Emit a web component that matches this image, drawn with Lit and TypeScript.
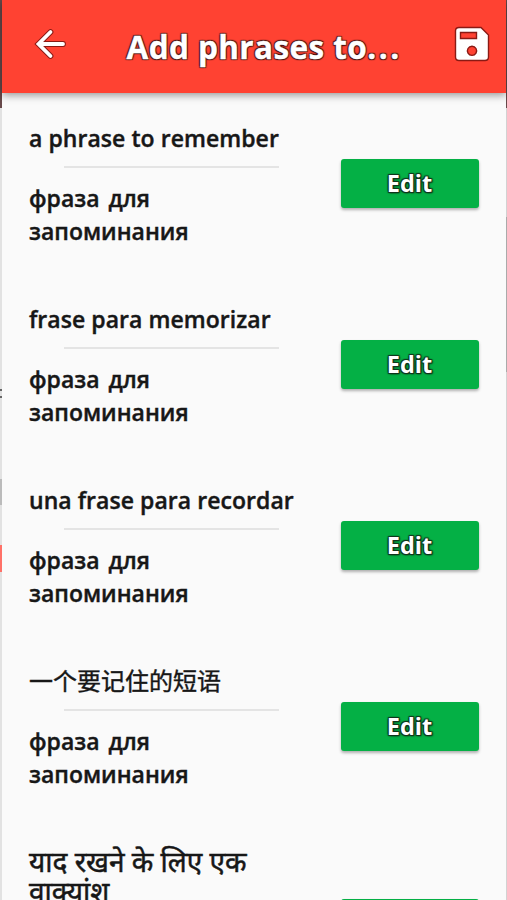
import { LitElement, html, css } from "lit";
import { customElement, property } from "lit/decorators.js";

@customElement("phrase-row")
class PhraseRow extends LitElement {
  @property() phrase = "";
  @property() translation = "";
  @property() script = "latin";

  static styles = css`
    :host {
      display: flex;
      align-items: center;
      justify-content: space-between;
      flex: none;
      padding: 28px 27.5px 26px 27px;
      font: 600 23px/33px "Open Sans", "Noto Sans", "Noto Sans CJK SC", sans-serif;
      color: #171717;
      -webkit-text-stroke: 0.4px #171717;
    }
    .texts {
      width: 276px;
      padding-top: 1.2px;
    }
    .latin {
      letter-spacing: 0.05px;
      white-space: nowrap;
    }
    .cjk {
      font-family: "Noto Sans CJK SC", sans-serif;
      font-weight: 400;
      font-size: 24px;
      line-height: 29px;
      height: 33px;
    }
    .deva {
      font-family: "Noto Sans", "Noto Sans Devanagari", sans-serif;
      font-weight: 400;
      font-size: 28px;
      line-height: 30px;
      width: 240px;
      height: 63px;
      -webkit-text-stroke-width: 0.5px;
    }
    .rule {
      height: 2px;
      margin: 11px 26px 14px 35px;
      background: #e4e4e4;
    }
    .translation {
      width: 210px;
      word-spacing: 3px;
    }
    .edit {
      box-sizing: border-box;
      width: 138px;
      height: 49px;
      margin-top: -1.5px;
      padding: 0;
      border: 0;
      border-radius: 3px;
      background: #04b045;
      box-shadow: 0 2px 3px rgba(0, 0, 0, 0.3);
      color: #fff;
      -webkit-text-stroke: 0;
      font: 700 23.5px/49px "Open Sans", "Noto Sans", sans-serif;
      text-shadow: 1px 1px 1px #10351b, -1px -1px 1px #10351b, 1px -1px 1px #10351b,
        -1px 1px 1px #10351b, 1px 1px 2px #10351b;
    }
  `;

  render() {
    return html`
      <div class="texts">
        <div class="phrase ${this.script}">${this.phrase}</div>
        <div class="rule"></div>
        <div class="translation">${this.translation}</div>
      </div>
      <button class="edit">Edit</button>
    `;
  }
}

@customElement("app-root")
class AppRoot extends LitElement {
  static styles = css`
    :host {
      display: flex;
      position: relative;
      height: 900px;
      overflow: hidden;
      background: #fafafa;
    }
    .edge {
      flex: none;
      display: flex;
      flex-direction: column;
      width: 2px;
      background: #e2e2e2;
    }
    .right {
      width: 1px;
      background: #d2d2d2;
    }
    .dark {
      height: 108px;
      background: #67494a;
    }
    .dot {
      height: 2px;
      width: 1.5px;
      margin-top: 5px;
      background: #666;
    }
    .dot.first {
      margin-top: 281px;
    }
    .grey {
      height: 26px;
      margin-top: 81px;
      background: #bbb;
    }
    .red {
      height: 27px;
      margin-top: 40px;
      background: #ff7168;
    }
    .mid {
      height: 155px;
      margin-top: 109px;
      background: #aaa;
    }
    .screen {
      flex: 1;
      min-width: 0;
      display: flex;
      flex-direction: column;
    }
    .bar {
      flex: none;
      display: flex;
      align-items: center;
      height: 92.5px;
      box-sizing: border-box;
      padding: 0 14.5px 4px 27.5px;
      background: #ff4232;
      box-shadow: 0 2px 8px rgba(0, 0, 0, 0.42);
      z-index: 1;
    }
    .icon {
      flex: none;
      display: block;
      overflow: visible;
    }
    .title {
      flex: 1;
      margin: 6px 0 0 57px;
      color: #fff;
      font: 700 31.5px/44px "Open Sans", "Noto Sans", sans-serif;
      letter-spacing: 0.4px;
      white-space: nowrap;
      -webkit-text-stroke: 0.4px #fff;
      text-shadow: 1px 1px 1px #4a1512, -1px -1px 1px #4a1512, 1px -1px 1px #4a1512,
        -1px 1px 1px #4a1512;
    }
    .more {
      letter-spacing: 2.6px;
    }
    .list {
      display: flex;
      flex-direction: column;
    }
  `;

  private rows = [
    ["a phrase to remember", "latin"],
    ["frase para memorizar", "latin"],
    ["una frase para recordar", "latin"],
    ["一个要记住的短语", "cjk"],
    ["याद रखने के लिए एक वाक्यांश", "deva"],
  ];

  render() {
    return html`
      <div class="edge">
        <div class="dark"></div>
        <div class="dot first"></div>
        <div class="dot"></div>
        <div class="grey"></div>
        <div class="red"></div>
      </div>
      <div class="screen">
        <header class="bar">
          <svg class="icon" width="40" height="40" viewBox="0 0 40 40" fill="none" stroke-linecap="round" stroke-linejoin="miter">
            <path d="M20.5 8 L8.5 20 L20.5 32 M9 20 H33" stroke="#8a1a14" stroke-width="5.8" />
            <path d="M20.5 8 L8.5 20 L20.5 32 M9 20 H33" stroke="#fff" stroke-width="3.8" />
          </svg>
          <div class="title">Add phrases to<span class="more">...</span></div>
          <svg class="icon" width="40" height="40" viewBox="0 0 40 40">
            <path
              d="M7 3.5 H29 L36.5 11 V33 Q36.5 36.5 33 36.5 H7 Q3.5 36.5 3.5 33 V7 Q3.5 3.5 7 3.5Z M8.5 8.5 V14.5 H24.5 V8.5Z M20 22.2 a4.6 4.6 0 1 0 .01 0Z"
              fill="#fff" fill-rule="evenodd" stroke="#8a1a14" stroke-width="1.4" />
          </svg>
        </header>
        <main class="list">
          ${this.rows.map(
            ([phrase, script]) => html`<phrase-row
              .phrase=${phrase}
              .script=${script}
              .translation=${"фраза для запоминания"}
            ></phrase-row>`
          )}
        </main>
      </div>
      <div class="edge right">
        <div class="dark"></div>
        <div class="mid"></div>
      </div>
    `;
  }
}
